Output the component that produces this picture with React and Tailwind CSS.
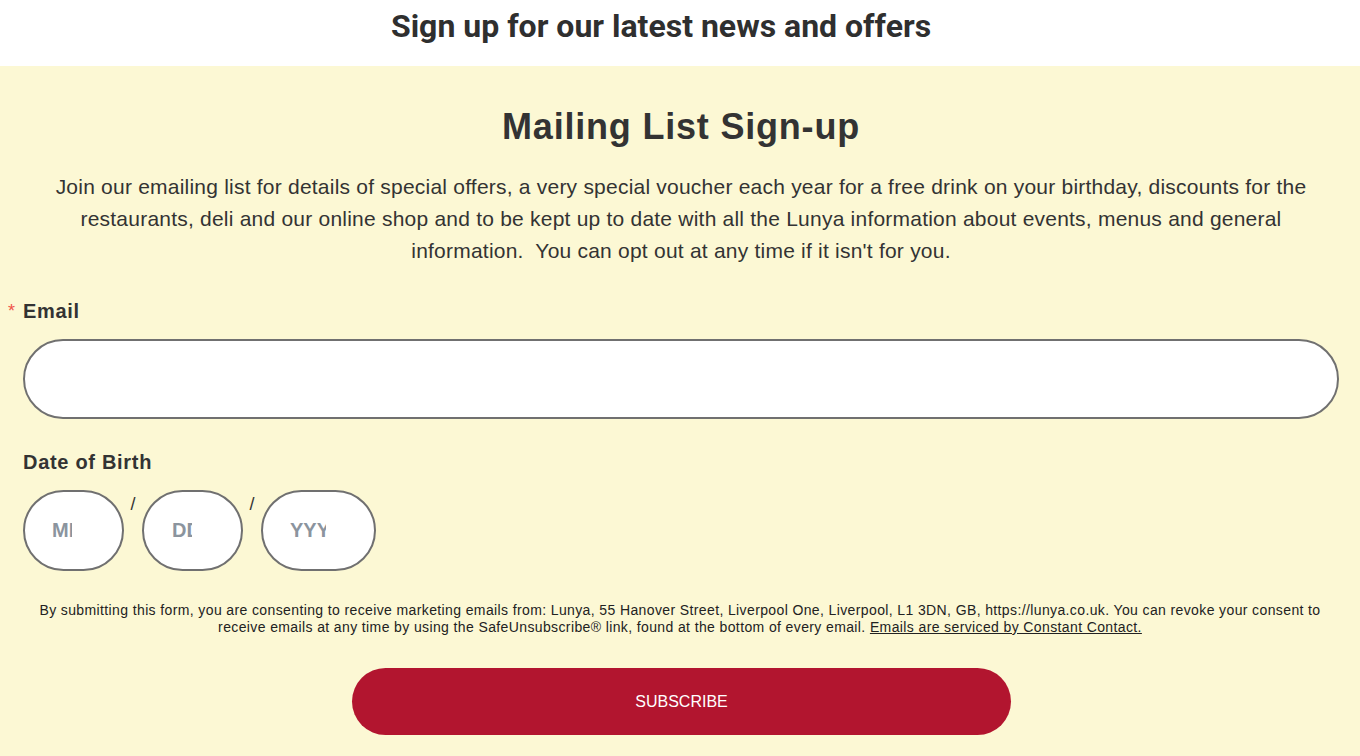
import React, { useState } from "react";

export default function App() {
  const [email, setEmail] = useState("");
  const [dob, setDob] = useState({ month: "", day: "", year: "" });

  const arial = { fontFamily: '"Liberation Sans", Arial, sans-serif' };

  return (
    <div className="min-h-screen bg-[#fcf8d4]" style={arial}>
      {/* Page heading strip */}
      <div className="bg-white h-[66px] flex justify-center pt-[5px] pr-[38px]">
        <h2 className="text-[32px] leading-[42px] font-bold text-[#2f2f2f] font-['Roboto',sans-serif]">
          Sign up for our latest news and offers
        </h2>
      </div>

      <div className="px-[21px] pt-[40px] pb-[20px] text-[#333]">
        <h1 className="text-[36px] leading-[42px] font-bold text-center ml-[2px] tracking-[0.8px]">
          Mailing List Sign-up
        </h1>
        <p className="mt-[23px] text-[21px] leading-[32px] text-center px-[10px] ml-[2px] tracking-[0.22px]">
          Join our emailing list for details of special offers, a very special voucher each year for a free drink on your birthday, discounts for the restaurants, deli and our online shop and to be kept up to date with all the Lunya information about events, menus and general information.&nbsp; You can opt out at any time if it isn't for you.
        </p>

        {/* Email */}
        <div className="mt-[32px] pl-[2px]">
          <label className="relative block text-[20px] leading-[24px] font-bold tracking-[0.7px]">
            <span className="absolute -left-[15px] top-0 text-[#f0544a] font-normal text-[18px]">*</span>
            Email
          </label>
          <input
            type="email"
            value={email}
            onChange={(e) => setEmail(e.target.value)}
            className="mt-[16px] block w-full h-[80px] rounded-full border-2 border-[#707070] bg-white px-[28px] text-[20px] outline-none"
          />
        </div>

        {/* Date of birth */}
        <div className="mt-[31px] pl-[2px]">
          <label className="block text-[20px] leading-[24px] font-bold tracking-[0.7px]">Date of Birth</label>
          <div className="mt-[16px] flex items-start">
            <input
              placeholder="MM"
              value={dob.month}
              onChange={(e) => setDob({ ...dob, month: e.target.value })}
              className="w-[101px] h-[81px] rounded-full border-2 border-[#707070] bg-white pl-[27px] pr-[50px] text-[20px] font-bold text-[#333] placeholder:text-[#8b949e] outline-none"
            />
            <span className="w-[18px] text-center text-[18px] leading-[22px] mt-[3px]">/</span>
            <input
              placeholder="DD"
              value={dob.day}
              onChange={(e) => setDob({ ...dob, day: e.target.value })}
              className="w-[101px] h-[81px] rounded-full border-2 border-[#707070] bg-white pl-[28px] pr-[49px] text-[20px] font-bold text-[#333] placeholder:text-[#8b949e] outline-none"
            />
            <span className="w-[18px] text-center text-[18px] leading-[22px] mt-[3px]">/</span>
            <input
              placeholder="YYYY"
              value={dob.year}
              onChange={(e) => setDob({ ...dob, year: e.target.value })}
              className="w-[115px] h-[81px] rounded-full border-2 border-[#707070] bg-white pl-[27px] pr-[48px] text-[20px] font-bold text-[#333] placeholder:text-[#8b949e] outline-none"
            />
          </div>
        </div>

        {/* Consent notice */}
        <p className="mt-[31px] text-[14px] leading-[17px] text-center text-[#222] px-[12px] tracking-[0.38px]">
          By submitting this form, you are consenting to receive marketing emails from: Lunya, 55 Hanover Street, Liverpool One, Liverpool, L1 3DN, GB, https://lunya.co.uk. You can revoke your consent to receive emails at any time by using the SafeUnsubscribe® link, found at the bottom of every email.{" "}
          <a href="#" className="underline">Emails are serviced by Constant Contact.</a>
        </p>

        <div className="mt-[32px] flex justify-center">
          <button className="w-[659px] h-[67px] rounded-full bg-[#b2152f] text-white text-[16px] ml-[3px]">
            SUBSCRIBE
          </button>
        </div>
      </div>
    </div>
  );
}
